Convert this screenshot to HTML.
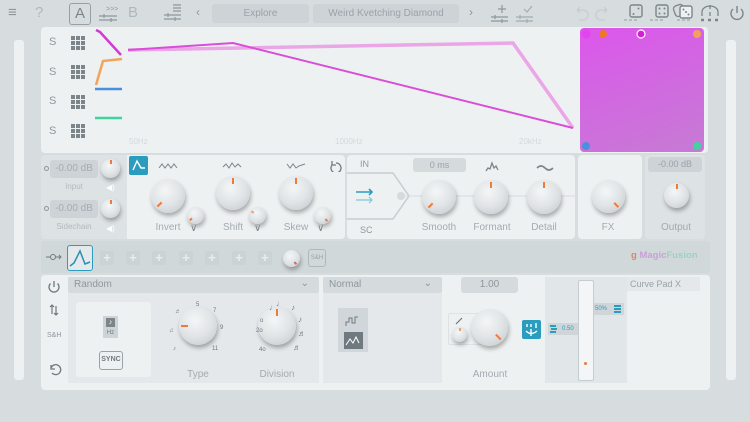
<!DOCTYPE html><html><head><meta charset="utf-8"><style>
*{margin:0;padding:0;box-sizing:border-box}
body{width:750px;height:422px;overflow:hidden;background:#d7dddf;font-family:"Liberation Sans",sans-serif;position:relative;color:#9aa3a8}
.a{position:absolute}
.k{position:absolute;border-radius:50%;background:radial-gradient(circle at 42% 35%,#f4f6f6,#e0e4e6 50%,#c3c9cc 95%);box-shadow:1px 3px 4px rgba(0,0,0,.3)}
.k span{position:absolute;inset:0;border-radius:50%}
.k span i{position:absolute;left:calc(50% - 1px);top:5%;width:2px;height:20%;background:#f07a3c}
.lbl{position:absolute;font-size:10px;color:#a3abb0;text-align:center}
.pl{position:absolute;width:14px;height:14px;background:#ccd3d6;border-radius:2px;color:#e9eded;font-size:13px;line-height:14px;text-align:center;font-weight:bold}
.ic{position:absolute;color:#8e979c;font-size:14px}
</style></head><body>
<!-- top bar -->
<div class="ic" style="left:8px;top:4px;font-size:15px">≡</div>
<div class="ic" style="left:35px;top:4px;font-size:15px;color:#b1b8bc">?</div>
<div class="a" style="left:69px;top:3px;width:22px;height:22px;border:1.5px solid #98a0a5;border-radius:3px;text-align:center;font-size:15px;line-height:19px;color:#7b858a">A</div>
<svg class="a" style="left:98px;top:4px" width="22" height="18"><text x="8" y="7" font-size="7" fill="#8e979c">&gt;&gt;&gt;</text><path d="M1 12h18M1 16h18M6 10v4M13 14v4" stroke="#8e979c" stroke-width="1.2"/></svg>
<div class="ic" style="left:128px;top:4px;font-size:15px;color:#b1b8bc">B</div>
<svg class="a" style="left:163px;top:3px" width="22" height="20"><path d="M10 2h8M10 5h8M10 8h8M1 12h17M1 16h17M5 10v4M12 14v4" stroke="#8e979c" stroke-width="1.2"/></svg>
<div class="ic" style="left:196px;top:5px;font-size:12px">‹</div>
<div class="a" style="left:212px;top:4px;width:97px;height:19px;background:#cdd3d6;border-radius:3px;font-size:10px;text-align:center;line-height:19px;color:#9aa3a8">Explore</div>
<div class="a" style="left:313px;top:4px;width:146px;height:19px;background:#cdd3d6;border-radius:3px;font-size:10px;text-align:center;line-height:19px;color:#9aa3a8">Weird Kvetching Diamond</div>
<div class="ic" style="left:469px;top:5px;font-size:12px">›</div>
<svg class="a" style="left:490px;top:3px" width="22" height="20"><path d="M12 2v8M8 6h8M1 14h17M1 18h17M5 12v4M12 16v4" stroke="#8e979c" stroke-width="1.2"/></svg>
<svg class="a" style="left:515px;top:3px" width="22" height="20"><path d="M9 6l3 3 5-6M1 14h17M1 18h17M5 12v4M12 16v4" stroke="#a4acb0" stroke-width="1.2" fill="none"/></svg>
<svg class="a" style="left:572px;top:4px" width="40" height="18"><path d="M5 6h6a5 5 0 010 10H7M5 6l3-3M5 6l3 3" stroke="#c6ccd0" stroke-width="1.3" fill="none"/><path d="M35 6h-6a5 5 0 000 10h4M35 6l-3-3M35 6l-3 3" stroke="#c6ccd0" stroke-width="1.3" fill="none"/></svg>
<svg class="a" style="left:622px;top:3px" width="100" height="20"><rect x="8" y="2" width="12" height="12" rx="2" stroke="#7b858a" stroke-width="1.4" fill="none"/><circle cx="11.5" cy="11" r="1" fill="#7b858a"/><circle cx="16.5" cy="5.5" r="1" fill="#7b858a"/><path d="M2 17h3M7 17h3M12 17h3" stroke="#b5bcc0" stroke-width="2"/>
<rect x="34" y="2" width="12" height="12" rx="2" stroke="#7b858a" stroke-width="1.4" fill="none"/><circle cx="37.5" cy="5.5" r="1" fill="#7b858a"/><circle cx="42.5" cy="5.5" r="1" fill="#7b858a"/><circle cx="37.5" cy="10.5" r="1" fill="#7b858a"/><circle cx="42.5" cy="10.5" r="1" fill="#7b858a"/><path d="M28 17h3M33 17h3M38 17h3" stroke="#b5bcc0" stroke-width="2"/>
<rect x="52" y="2" width="10" height="11" rx="3" stroke="#7b858a" stroke-width="1.3" fill="none" transform="rotate(-20 57 7)"/><rect x="58" y="3" width="12" height="12" rx="2" stroke="#7b858a" stroke-width="1.4" fill="#eef1f2"/><circle cx="61.5" cy="6.5" r="1" fill="#7b858a"/><circle cx="66.5" cy="11.5" r="1" fill="#7b858a"/><circle cx="64" cy="9" r="1" fill="#7b858a"/><path d="M55 17h3M60 17h3M65 17h3" stroke="#b5bcc0" stroke-width="2"/>
<path d="M88 2v4M80 9a8 6 0 0116 0M80 9v4M88 9v4M96 9v4" stroke="#7b858a" stroke-width="1.3" fill="none"/><path d="M79 17h3M86 17h3M93 17h3" stroke="#7b858a" stroke-width="2.5"/></svg>
<svg class="a" style="left:728px;top:4px" width="18" height="18"><path d="M9 2v7M5 5a6 6 0 108 0" stroke="#7b858a" stroke-width="1.4" fill="none"/></svg>
<!-- side strips -->
<div class="a" style="left:14px;top:40px;width:10px;height:340px;background:#eef1f2;border-radius:3px"></div>
<div class="a" style="left:726px;top:40px;width:10px;height:340px;background:#eef1f2;border-radius:3px"></div>
<!-- graph panel -->
<div class="a" style="left:41px;top:27px;width:667px;height:126px;background:#eef1f2;border-radius:4px"></div>
<div class="a" style="left:49px;top:28px;font-size:11px;color:#8e979c;line-height:29.5px">S<br>S<br>S<br>S</div>
<svg class="a" style="left:71px;top:36px" width="16" height="105"><g fill="#7b858a"><g id="g"><rect x="0" y="0" width="4" height="4"/><rect x="5" y="0" width="4" height="4"/><rect x="10" y="0" width="4" height="4"/><rect x="0" y="5" width="4" height="4"/><rect x="5" y="5" width="4" height="4"/><rect x="10" y="5" width="4" height="4"/><rect x="0" y="10" width="4" height="4"/><rect x="5" y="10" width="4" height="4"/><rect x="10" y="10" width="4" height="4"/></g><use href="#g" y="29"/><use href="#g" y="59"/><use href="#g" y="88"/></g></svg>
<svg class="a" style="left:0;top:0" width="750" height="160">
<path d="M128 50L513 43L573 128" stroke="#eaa6e7" stroke-width="3.5" fill="none"/>
<path d="M128 50L233 43L573 128" stroke="#d94ed9" stroke-width="2" fill="none"/>
<path d="M96 30L100 32L121 55" stroke="#d03ad5" stroke-width="2.5" fill="none"/>
<path d="M96 85L103 61L122 59" stroke="#f4a35a" stroke-width="2.5" fill="none"/>
<path d="M95 89H122" stroke="#4a90e0" stroke-width="2.5"/>
<path d="M95 118H122" stroke="#3fd49b" stroke-width="2.5"/>
<text x="129" y="144" font-size="8" fill="#d3d8db">50Hz</text>
<text x="335" y="144" font-size="8" fill="#d3d8db">1000Hz</text>
<text x="519" y="144" font-size="8" fill="#d3d8db">20kHz</text>
</svg>
<div class="a" style="left:580px;top:28px;width:124px;height:124px;border-radius:4px;background:linear-gradient(160deg,#dc56ec,#c67bd4)"></div>
<svg class="a" style="left:578px;top:26px" width="128" height="128"><circle cx="8" cy="8" r="4.5" fill="#e444f0"/><circle cx="25" cy="8" r="4" fill="#f0772a"/><circle cx="63" cy="8" r="4" fill="#d41fd4" stroke="#fff" stroke-width="1.2"/><circle cx="119" cy="8" r="4" fill="#f5a05a"/><circle cx="8" cy="120" r="4" fill="#4a90e0"/><circle cx="119" cy="120" r="4" fill="#3fd49b"/></svg>
<!-- input panel -->
<div class="a" style="left:41px;top:155px;width:86px;height:84px;background:#dde2e4;border-radius:4px 0 0 4px"></div>
<div class="a" style="left:44px;top:166px;width:5px;height:5px;border:1px solid #8e979c;border-radius:50%"></div>
<div class="a" style="left:44px;top:206px;width:5px;height:5px;border:1px solid #8e979c;border-radius:50%"></div>
<div class="a" style="left:50px;top:160px;width:48px;height:18px;background:#cdd3d6;border-radius:3px;font-size:10px;line-height:18px;text-align:center;color:#a5adb1">-0.00 dB</div>
<div class="a" style="left:50px;top:200px;width:48px;height:18px;background:#cdd3d6;border-radius:3px;font-size:10px;line-height:18px;text-align:center;color:#a5adb1">-0.00 dB</div>
<div class="lbl" style="left:50px;top:182px;width:48px;font-size:8px;color:#b3babe">Input</div>
<div class="lbl" style="left:50px;top:222px;width:48px;font-size:8px;color:#b3babe">Sidechain</div>
<div class="a" style="left:106px;top:183px;font-size:8px;color:#fff">◀)</div>
<div class="a" style="left:106px;top:224px;font-size:8px;color:#fff">◀)</div>
<div class="k" style="left:101px;top:159px;width:19px;height:19px"><span><i></i></span></div>
<div class="k" style="left:101px;top:199px;width:19px;height:19px"><span><i></i></span></div>
<!-- knob panel -->
<div class="a" style="left:127px;top:155px;width:218px;height:84px;background:#eef1f2;border-radius:0 4px 4px 0"></div>
<div class="a" style="left:129px;top:156px;width:19px;height:19px;background:#2a9dbf;border-radius:2px"></div>
<svg class="a" style="left:129px;top:156px" width="19" height="19"><path d="M4 14L8 5L12 12H16" stroke="#fff" stroke-width="1.4" fill="none"/></svg>
<svg class="a" style="left:155px;top:160px" width="190" height="12"><path d="M4 8l3-4 3 4 3-4 3 4 3-4 3 4" stroke="#7b858a" fill="none"/><path d="M68 7l3-3 3 4 3-5 3 4 3-3 3 3" stroke="#7b858a" fill="none"/><path d="M132 4l3 4 3-4 3 4 3-2 3 -1 3-1" stroke="#7b858a" fill="none"/><path d="M181 3a5 5 0 11-4 2M177 1v4h4" stroke="#6f797e" stroke-width="1.3" fill="none"/></svg>
<div class="k" style="left:151px;top:179px;width:34px;height:34px"><span style="transform:rotate(-135deg)"><i></i></span></div>
<div class="k" style="left:187px;top:207px;width:17px;height:17px"><span style="transform:rotate(-135deg)"><i></i></span></div>
<div class="k" style="left:216px;top:176px;width:34px;height:34px"><span><i></i></span></div>
<div class="k" style="left:249px;top:207px;width:17px;height:17px"><span style="transform:rotate(-60deg)"><i style="background:#f0a070"></i></span></div>
<div class="k" style="left:279px;top:176px;width:34px;height:34px"><span><i></i></span></div>
<div class="k" style="left:314px;top:207px;width:17px;height:17px"><span style="transform:rotate(135deg)"><i></i></span></div>
<div class="lbl" style="left:148px;top:222px;width:40px">Invert</div>
<div class="lbl" style="left:213px;top:222px;width:40px">Shift</div>
<div class="lbl" style="left:276px;top:222px;width:40px">Skew</div>
<div class="a" style="left:190px;top:223px;font-size:10px;color:#7b858a">∨</div>
<div class="a" style="left:254px;top:223px;font-size:10px;color:#7b858a">∨</div>
<div class="a" style="left:317px;top:223px;font-size:10px;color:#7b858a">∨</div>
<!-- IN SC panel -->
<div class="a" style="left:347px;top:155px;width:228px;height:84px;background:#eef1f2;border-radius:4px"></div>
<svg class="a" style="left:347px;top:155px" width="230" height="84"><path d="M0 18H46L62 41L46 64H0" stroke="#c6ccd0" stroke-width="1.5" fill="none"/><circle cx="54" cy="41" r="4" fill="#d5dadd"/><path d="M58 41H228" stroke="#d5dadd"/><path d="M9 37h16M22 34l3 3-3 3" stroke="#2a9dbf" stroke-width="1.6" fill="none"/><path d="M9 45h16M22 42l3 3-3 3" stroke="#7ec6dd" stroke-width="1.2" fill="none"/><text x="13" y="12" font-size="9" fill="#8e979c">IN</text><text x="13" y="78" font-size="9" fill="#8e979c">SC</text></svg>
<div class="a" style="left:413px;top:158px;width:53px;height:14px;background:#d5dadd;border-radius:3px;font-size:9px;line-height:14px;text-align:center;color:#9aa3a8">0 ms</div>
<svg class="a" style="left:480px;top:158px" width="80" height="16"><path d="M6 13l2-3 2 1 2-6 2 5 2-2 2 4" stroke="#7b858a" stroke-width="1.3" fill="none"/><path d="M57 10q4-4 8 0t8 0" stroke="#7b858a" stroke-width="1.6" fill="none"/></svg>
<div class="k" style="left:422px;top:180px;width:34px;height:34px"><span style="transform:rotate(-135deg)"><i></i></span></div>
<div class="k" style="left:474px;top:180px;width:34px;height:34px"><span><i></i></span></div>
<div class="k" style="left:527px;top:180px;width:34px;height:34px"><span><i></i></span></div>
<div class="lbl" style="left:419px;top:222px;width:40px">Smooth</div>
<div class="lbl" style="left:470px;top:222px;width:44px">Formant</div>
<div class="lbl" style="left:524px;top:222px;width:40px">Detail</div>
<!-- FX -->
<div class="a" style="left:578px;top:155px;width:64px;height:84px;background:#eef1f2;border-radius:4px"></div>
<div class="k" style="left:592px;top:180px;width:33px;height:33px"><span style="transform:rotate(135deg)"><i></i></span></div>
<div class="lbl" style="left:588px;top:222px;width:40px">FX</div>
<!-- Output -->
<div class="a" style="left:645px;top:155px;width:60px;height:84px;background:#dde2e4;border-radius:4px"></div>
<div class="a" style="left:648px;top:157px;width:54px;height:15px;background:#cdd3d6;border-radius:3px;font-size:9px;line-height:15px;text-align:center;color:#9aa3a8">-0.00 dB</div>
<div class="k" style="left:664px;top:183px;width:25px;height:25px"><span><i></i></span></div>
<div class="lbl" style="left:655px;top:222px;width:42px">Output</div>
<!-- mod row -->
<div class="a" style="left:41px;top:241px;width:669px;height:32px;background:#d1d8da;border-radius:3px"></div>
<svg class="a" style="left:46px;top:252px" width="20" height="10"><path d="M0 5h4M10 5h4M13 3l2 2-2 2" stroke="#6f797e" fill="none"/><circle cx="7" cy="5" r="2.5" stroke="#6f797e" fill="none"/></svg>
<div class="a" style="left:67px;top:245px;width:26px;height:26px;border:1.3px solid #2a9dbf;border-radius:3px;background:#e4e9eb"></div>
<svg class="a" style="left:67px;top:245px" width="26" height="26"><path d="M3 21L7 18L13 6L18 19L23 17" stroke="#2a8fb0" stroke-width="1.5" fill="none"/></svg>
<div class="pl" style="left:100px;top:251px">+</div><div class="pl" style="left:126px;top:251px">+</div><div class="pl" style="left:152px;top:251px">+</div><div class="pl" style="left:179px;top:251px">+</div><div class="pl" style="left:205px;top:251px">+</div><div class="pl" style="left:232px;top:251px">+</div><div class="pl" style="left:258px;top:251px">+</div>
<div class="k" style="left:283px;top:250px;width:17px;height:17px"><span style="transform:rotate(135deg)"><i style="background:#f05a5a"></i></span></div>
<div class="a" style="left:308px;top:249px;width:18px;height:18px;border:1.3px solid #b1b8bc;border-radius:3px;font-size:6px;line-height:16px;text-align:center;color:#9aa3a8">S&amp;H</div>
<div class="a" style="left:631px;top:250px;font-size:9.5px;font-weight:bold;color:#c9a0d8"><span style="color:#d08a70">g</span> Magic<span style="color:#9fd0c0">Fusion</span></div>
<!-- bottom panel -->
<div class="a" style="left:41px;top:275px;width:669px;height:115px;background:#eef1f2;border-radius:4px"></div>
<svg class="a" style="left:46px;top:278px" width="18" height="106"><path d="M8 3v6M4.5 5.5a5 5 0 107 0" stroke="#6f797e" stroke-width="1.3" fill="none"/><path d="M6 27v9M4 29l2-2 2 2M10 28v9M8 35l2 2 2-2" stroke="#6f797e" stroke-width="1.2" fill="none"/><text x="1" y="59" font-size="7" fill="#8e979c">S&amp;H</text><path d="M5 90a5 5 0 11 1 5M5 87v4h4" stroke="#6f797e" stroke-width="1.3" fill="none"/></svg>
<div class="a" style="left:68px;top:277px;width:251px;height:16px;background:#d5dadd;border-radius:2px;font-size:10px;line-height:16px;padding-left:6px;color:#8e979c">Random<span style="position:absolute;right:10px;top:-1px">⌄</span></div>
<div class="a" style="left:68px;top:293px;width:251px;height:90px;background:#e4e8ea"></div>
<div class="a" style="left:76px;top:302px;width:75px;height:75px;background:#eef1f2;border-radius:3px"></div>
<div class="a" style="left:103px;top:316px;width:15px;height:22px;background:#cdd3d6;font-size:6px;text-align:center;color:#6f797e;line-height:10px"><span style="display:inline-block;background:#7b858a;color:#fff;width:9px;height:9px;margin-top:2px;font-size:7px;line-height:9px">♪</span><br>Hz</div>
<div class="a" style="left:99px;top:351px;width:24px;height:19px;border:1.5px solid #9aa3a8;border-radius:3px;font-size:7px;font-weight:bold;line-height:16px;text-align:center;color:#6f797e">SYNC</div>
<div class="k" style="left:179px;top:307px;width:38px;height:38px"><span style="transform:rotate(-90deg)"><i></i></span></div>
<div class="k" style="left:258px;top:307px;width:38px;height:38px"><span><i></i></span></div>
<svg class="a" style="left:160px;top:298px" width="150" height="55" font-size="6" fill="#6f797e"><text x="36" y="8">5</text><text x="53" y="14">7</text><text x="60" y="31">9</text><text x="52" y="52">11</text><text x="15" y="15">♬</text><text x="9" y="34">♫</text><text x="13" y="52">♪</text><text x="100" y="24">o</text><text x="96" y="34">2o</text><text x="99" y="53">4o</text><text x="109" y="12" font-size="8">♩</text><text x="116" y="8" font-size="8">♩</text><text x="131" y="12" font-size="8">♪</text><text x="138" y="24" font-size="8">♪</text><text x="138" y="38" font-size="8">♬</text><text x="133" y="52" font-size="8">♬</text></svg>
<div class="lbl" style="left:178px;top:369px;width:40px">Type</div>
<div class="lbl" style="left:252px;top:369px;width:50px">Division</div>
<div class="a" style="left:323px;top:277px;width:119px;height:16px;background:#d5dadd;border-radius:2px;font-size:10px;line-height:16px;padding-left:6px;color:#8e979c">Normal<span style="position:absolute;right:10px;top:-1px">⌄</span></div>
<div class="a" style="left:323px;top:293px;width:119px;height:90px;background:#e4e8ea"></div>
<div class="a" style="left:338px;top:308px;width:30px;height:44px;background:#d0d6d9"></div>
<svg class="a" style="left:338px;top:308px" width="30" height="44"><path d="M8 18v-4h3v-4h3v5h3v-6h3" stroke="#6f797e" fill="none"/><rect x="6" y="24" width="19" height="17" fill="#6f7a80"/><path d="M8 37l4-6 3 4 3-6 3 6" stroke="#fff" fill="none"/></svg>
<div class="a" style="left:461px;top:277px;width:57px;height:16px;background:#d5dadd;border-radius:3px;font-size:10px;line-height:16px;text-align:center;color:#8e979c">1.00</div>
<div class="a" style="left:448px;top:313px;width:34px;height:32px;border:1px solid #dde2e4;border-radius:2px"></div>
<svg class="a" style="left:454px;top:316px" width="10" height="10"><path d="M2 8L8 2" stroke="#6f797e" stroke-width="1.2"/></svg>
<div class="k" style="left:452px;top:327px;width:15px;height:15px"><span><i style="background:#f0a070"></i></span></div>
<div class="k" style="left:471px;top:309px;width:37px;height:37px"><span style="transform:rotate(135deg)"><i></i></span></div>
<div class="lbl" style="left:468px;top:369px;width:44px">Amount</div>
<div class="a" style="left:522px;top:320px;width:19px;height:19px;background:#2a9dbf;border-radius:2px"></div>
<svg class="a" style="left:522px;top:320px" width="19" height="19"><path d="M5 4v3M9 4v3M14 3v5M4 11q5 5 11 0M9 9v7" stroke="#fff" stroke-width="1.4" fill="none"/></svg>
<div class="a" style="left:545px;top:277px;width:82px;height:106px;background:#e1e6e8"></div>
<div class="a" style="left:578px;top:280px;width:16px;height:101px;background:#f3f5f6;border:1.5px solid #c6ccd0;border-radius:2px"></div>
<div class="a" style="left:584px;top:362px;width:3px;height:3px;border-radius:50%;background:#f07a3c"></div>
<div class="a" style="left:548px;top:323px;width:30px;height:12px;background:#cfd5d8;font-size:6px;line-height:12px;color:#2a9dbf;padding-left:14px">0.50</div>
<div class="a" style="left:550px;top:325px;width:6px;height:8px;border-top:2px solid #2a9dbf;border-bottom:2px solid #2a9dbf"></div>
<div class="a" style="left:551px;top:328px;width:6px;height:2px;background:#2a9dbf"></div>
<div class="a" style="left:594px;top:303px;width:30px;height:12px;background:#cfd5d8;font-size:6px;line-height:12px;color:#2a9dbf;padding-left:1px">50%</div>
<div class="a" style="left:614px;top:305px;width:7px;height:8px;border-top:2px solid #2a9dbf;border-bottom:2px solid #2a9dbf"></div>
<div class="a" style="left:614px;top:308px;width:7px;height:2px;background:#2a9dbf"></div>
<div class="a" style="left:627px;top:277px;width:73px;height:14px;background:#e4e8ea;font-size:9px;line-height:14px;padding-left:3px;color:#9aa3a8">Curve Pad X</div>
</body></html>
